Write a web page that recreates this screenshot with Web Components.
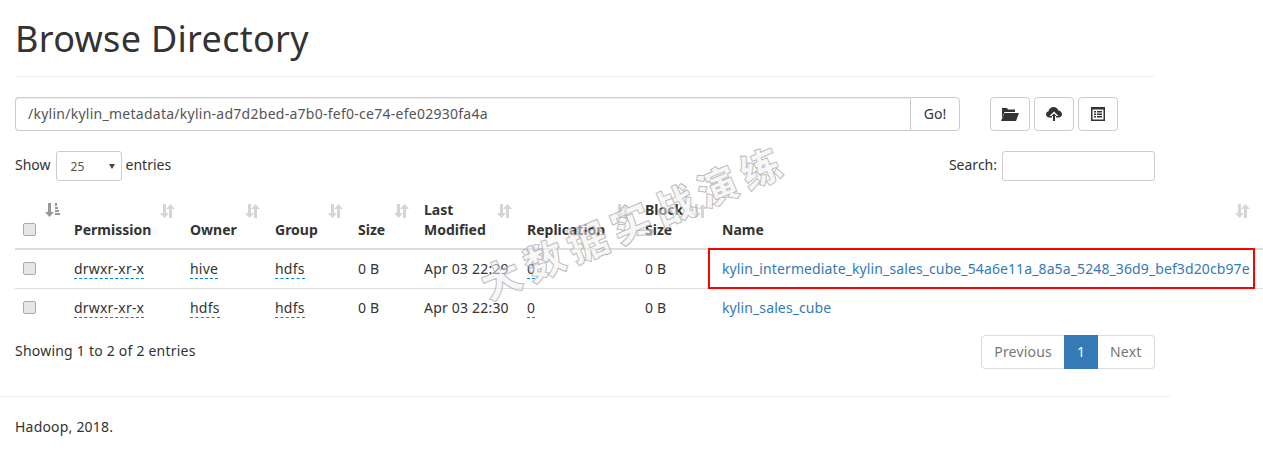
<!DOCTYPE html>
<html lang="en">
<head>
<meta charset="utf-8">
<title>Browsing HDFS</title>
<style>
  html, body { margin: 0; padding: 0; background: #fff; overflow: hidden; }
  body { font: 14px/20px "Noto Sans", "Open Sans", sans-serif; color: #333; }
</style>
</head>
<body>
<hd-page>
  <hd-path-bar slot="bar" path="/kylin/kylin_metadata/kylin-ad7d2bed-a7b0-fef0-ce74-efe02930fa4a"></hd-path-bar>
  <hd-table slot="table"></hd-table>
</hd-page>

<script>
// Иконки сортировки и кнопок
const sortIcon = (active) => `
  <svg class="sort ${active ? 'on' : ''}" width="15" height="14" viewBox="0 0 15 14">
    ${active
      ? '<path d="M3 0h3v9h3l-4.500 5L0 9h3z"/><path d="M10 0h2v3h-2zM10 4h3v2h-3zM10 7h4v2h-4zM10 10h5v2h-5z"/>'
      : '<path d="M3 0h3v9h3l-4.500 5L0 9h3z"/><path d="M10.500 0L15 5h-3v9H9V5H6z"/>'}
  </svg>`;

const icons = {
  folder: '<svg width="18" height="13" viewBox="0 0 18 13"><path fill="#333" d="M1 0h5l1 1.500h7V4H3.500L1 10zM3.500 5H18l-3 8H0z"/></svg>',
  upload: '<svg width="16" height="14" viewBox="0 0 16 14"><path fill="#333" d="M3.500 10.500C1.500 10.500 0 9 0 7.200 0 5.700 1 4.500 2.500 4.200 3 1.800 5 0 7.500 0c2.300 0 4.200 1.500 4.800 3.500C14.400 3.600 16 5.200 16 7.200c0 1.800-1.500 3.300-3.500 3.300z"/><path fill="#fff" d="M8 4.500l4.500 4.500H10v5H6V9H3.500z"/><path fill="#333" d="M8 6.500L10.500 9H9v5H7V9H5.500z"/></svg>',
  list: '<svg width="14" height="14" viewBox="0 0 14 14"><path fill="#333" fill-rule="evenodd" d="M0 0h14v14H0zM1.500 2.500v10h11v-10z"/><path fill="#333" d="M3 4h2v1.500H3zM6 4h5v1.500H6zM3 6.500h2V8H3zM6 6.500h5V8H6zM3 9h2v1.500H3zM6 9h5v1.500H6z"/></svg>'
};

// Каркас страницы
class HdPage extends HTMLElement {
  constructor() {
    super();
    this.attachShadow({ mode: 'open' });
    this.shadowRoot.innerHTML = `
      <style>
        :host { display: block; width: 1170px; position: relative; }
        .head { margin: 0 15px; height: 76px; border-bottom: 1px solid #eee; }
        h1 { margin: 0; padding-top: 16px; font-size: 36px; line-height: 46px; font-weight: 400; letter-spacing: .3px; }
        .body { padding: 20px 15px 0; }
        hr { margin: 27px 0 0; border: 0; border-top: 1px solid #eee; }
        footer { padding: 20px 15px 0; letter-spacing: .2px; }
        /* водяной знак и красная рамка лежат поверх таблицы */
        .mark {
          position: absolute; left: 482px; top: 265px; white-space: nowrap;
          font: 900 40px/40px "Noto Sans CJK SC", sans-serif; letter-spacing: 7px;
          color: rgba(240,240,240,.55); -webkit-text-stroke: 1px rgba(165,165,165,.7);
          transform: rotate(-23deg); transform-origin: 0 50%; pointer-events: none;
        }
        .red { position: absolute; left: 708px; top: 248px; width: 547px; height: 41px; box-sizing: border-box; border: 2px solid #f00; pointer-events: none; }
      </style>
      <div class="head"><h1>Browse Directory</h1></div>
      <div class="body">
        <slot name="bar"></slot>
        <slot name="table"></slot>
      </div>
      <hr>
      <footer>Hadoop, 2018.</footer>
      <div class="mark">大数据实战演练</div>
      <div class="red"></div>
    `;
  }
}

// Строка пути и кнопки
class HdPathBar extends HTMLElement {
  constructor() {
    super();
    this.attachShadow({ mode: 'open' });
    this.shadowRoot.innerHTML = `
      <style>
        :host { display: flex; height: 34px; }
        .group { display: flex; width: 945px; }
        .path {
          flex: 1; box-sizing: border-box; border: 1px solid #ccc; border-right: 0; border-radius: 4px 0 0 4px;
          padding: 6px 12px; line-height: 20px; color: #555; letter-spacing: .26px; box-shadow: inset 0 1px 1px rgba(0,0,0,.075);
        }
        .go { width: 50px; box-sizing: border-box; border: 1px solid #ccc; border-radius: 0 4px 4px 0; text-align: center; line-height: 32px; }
        .btns { display: flex; gap: 4px; margin-left: 30px; }
        .btn { width: 40px; box-sizing: border-box; border: 1px solid #ccc; border-radius: 4px; display: flex; align-items: center; justify-content: center; }
      </style>
      <div class="group">
        <div class="path">${this.getAttribute('path')}</div>
        <div class="go">Go!</div>
      </div>
      <div class="btns">
        <div class="btn">${icons.folder}</div>
        <div class="btn">${icons.upload}</div>
        <div class="btn">${icons.list}</div>
      </div>
    `;
  }
}

// Таблица файлов
class HdTable extends HTMLElement {
  constructor() {
    super();
    this.attachShadow({ mode: 'open' });
    const heads = [
      ['', 51], ['Permission', 116], ['Owner', 85], ['Group', 83], ['Size', 66],
      ['Last<br>Modified', 103], ['Replication', 118], ['Block<br>Size', 77], ['Name', 549]
    ];
    const rows = [
      ['drwxr-xr-x', 'hive', 'hdfs', '0 B', 'Apr 03 22:29', '0', '0 B', 'kylin_intermediate_kylin_sales_cube_54a6e11a_8a5a_5248_36d9_bef3d20cb97e'],
      ['drwxr-xr-x', 'hdfs', 'hdfs', '0 B', 'Apr 03 22:30', '0', '0 B', 'kylin_sales_cube']
    ];
    const box = '<span class="check"></span>';
    const under = (t) => `<span class="edit">${t}</span>`;
    this.shadowRoot.innerHTML = `
      <style>
        :host { display: block; }
        .tools { display: flex; justify-content: space-between; align-items: center; width: 1140px; height: 30px; margin-top: 20px; }
        .tools > div { display: flex; align-items: center; gap: 5px; line-height: 28px; }
        .tools > div > b { font-weight: 400; position: relative; top: -1px; }
        .tools .last { margin-left: -1px; }
        .select {
          box-sizing: border-box; width: 66px; height: 30px; border: 1px solid #ccc; border-radius: 3px;
          font-size: 12px; padding-left: 14px; line-height: 30px; color: #555; position: relative;
        }
        .select i { position: absolute; right: 6px; top: 12px; border: 3px solid transparent; border-top: 5px solid #444; border-bottom: 0; }
        .search { box-sizing: border-box; width: 153px; height: 30px; border: 1px solid #ccc; border-radius: 3px; }
        table { border-collapse: collapse; table-layout: fixed; width: 1248px; margin-top: 11px; }
        th, td { padding: 8px; text-align: left; box-sizing: border-box; }
        th { position: relative; vertical-align: bottom; font-weight: 700; border-bottom: 2px solid #ddd; height: 47px; }
        td { border-bottom: 1px solid #ddd; height: 39px; vertical-align: middle; letter-spacing: .2px; }
        tr:last-child td { border-bottom: 0; }
        .sort { position: absolute; right: 7px; top: 12px; fill: #333; opacity: .2; }
        .sort.on { opacity: .5; right: 6px; top: 11px; }
        th:last-child .sort { right: 13px; }
        .check {
          display: block; width: 13px; height: 13px; box-sizing: border-box; border: 1px solid #aaa; border-radius: 2px;
          background: #e6e6e6;
        }
        th .check { margin-bottom: 4px; }
        .edit { border-bottom: 1px dashed #08c; }
        a { color: #337ab7; text-decoration: none; white-space: nowrap; letter-spacing: .11px; }
        .foot { display: flex; justify-content: space-between; width: 1140px; margin-top: 8px; }
        .info { padding-top: 6px; letter-spacing: .22px; }
        .pages { display: flex; height: 34px; box-sizing: border-box; }
        .pages span { box-sizing: border-box; border: 1px solid #ddd; padding: 6px 12px; line-height: 20px; color: #777; letter-spacing: .2px; }
        .pages span:first-child { border-radius: 4px 0 0 4px; margin-right: -1px; }
        .pages span:last-child { border-radius: 0 4px 4px 0; width: 57px; border-left: 0; }
        .pages .cur { background: #337ab7; border-color: #337ab7; color: #fff; width: 34px; text-align: center; padding: 6px 0; }
      </style>
      <div class="tools">
        <div><b>Show</b> <span class="select">25<i></i></span> <b class="last">entries</b></div>
        <div><b>Search:</b> <span class="search"></span></div>
      </div>
      <table>
        <colgroup>${heads.map(h => `<col style="width:${h[1]}px">`).join('')}</colgroup>
        <thead><tr>
          ${heads.map((h, i) => `<th>${i === 0 ? box : h[0]}${sortIcon(i === 0)}</th>`).join('')}
        </tr></thead>
        <tbody>
          ${rows.map((r) => `<tr>
            <td>${box}</td>
            <td>${under(r[0])}</td><td>${under(r[1])}</td><td>${under(r[2])}</td>
            <td>${r[3]}</td><td>${r[4]}</td><td>${under(r[5])}</td><td>${r[6]}</td>
            <td><a href="#">${r[7]}</a></td>
          </tr>`).join('')}
        </tbody>
      </table>
      <div class="foot">
        <div class="info">Showing 1 to 2 of 2 entries</div>
        <div class="pages"><span>Previous</span><span class="cur">1</span><span>Next</span></div>
      </div>
    `;
  }
}

customElements.define('hd-page', HdPage);
customElements.define('hd-path-bar', HdPathBar);
customElements.define('hd-table', HdTable);
</script>
</body>
</html>
